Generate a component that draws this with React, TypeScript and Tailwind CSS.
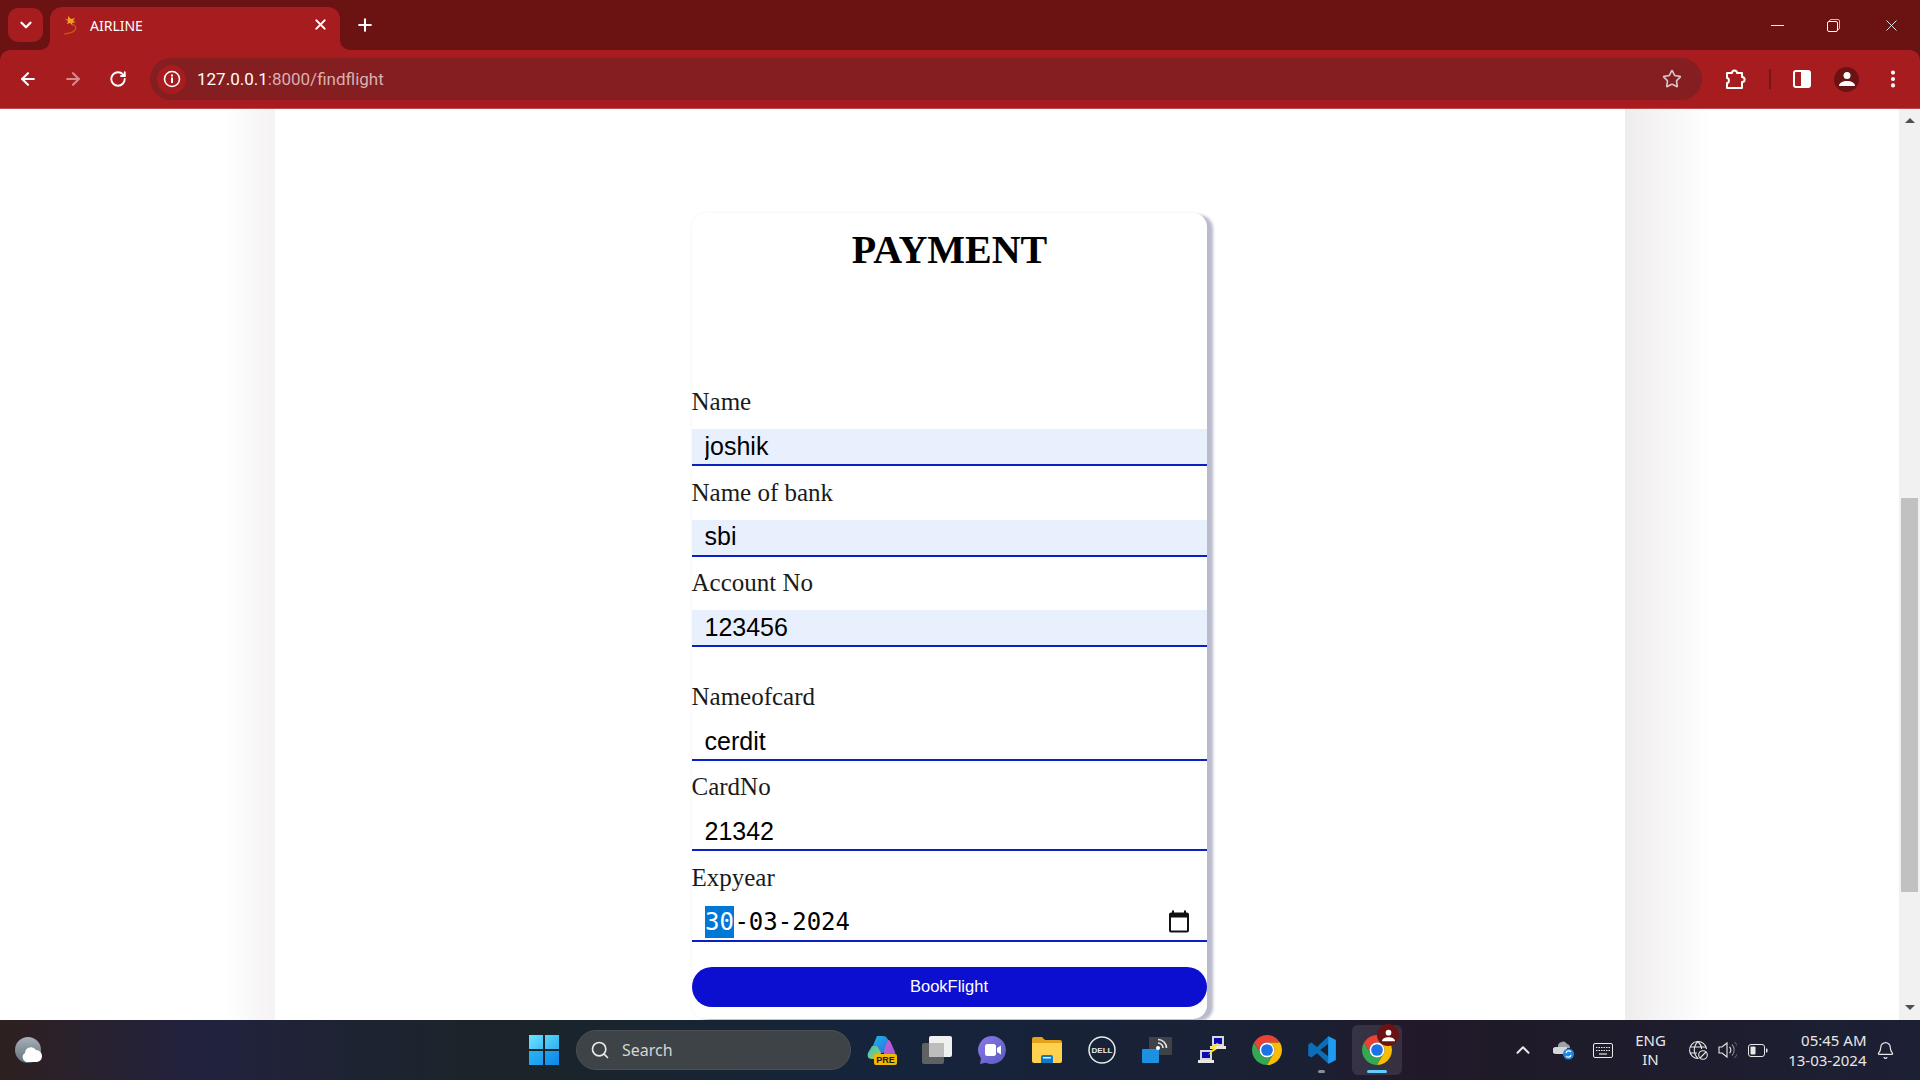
import {
  ArrowLeft,
  ArrowRight,
  Bell,
  ChevronDown,
  ChevronUp,
  EllipsisVertical,
  Plus,
  RotateCw,
  Search,
  Star,
  X,
} from "lucide-react";

interface Field {
  label: string;
  value: string;
  filled?: boolean;
  spaced?: boolean;
}

const fields: Field[] = [
  { label: "Name", value: "joshik", filled: true },
  { label: "Name of bank", value: "sbi", filled: true },
  { label: "Account No", value: "123456", filled: true },
  { label: "Nameofcard", value: "cerdit", spaced: true },
  { label: "CardNo", value: "21342" },
];

function ChromeLogo({ size = 30 }: { size?: number }) {
  return (
    <svg width={size} height={size} viewBox="2 2 44 44">
      <path fill="#ea4335" d="M43.05 13A22 22 0 0 0 4.95 13L14.5 29.5A11 11 0 0 1 24 13Z" />
      <path fill="#34a853" d="M4.95 13A22 22 0 0 0 24 46L33.5 29.5A11 11 0 0 1 14.5 29.5Z" />
      <path fill="#fbbc04" d="M24 46A22 22 0 0 0 43.05 13L24 13A11 11 0 0 1 33.5 29.5Z" />
      <circle cx="24" cy="24" r="11" fill="#fff" />
      <circle cx="24" cy="24" r="8.6" fill="#1a73e8" />
    </svg>
  );
}

function CopilotIcon() {
  return (
    <svg width="30" height="30" viewBox="0 0 30 30">
      <defs>
        <linearGradient id="cpA" x1="0" y1="0" x2="1" y2="1">
          <stop offset="0" stopColor="#1fb6e8" />
          <stop offset="1" stopColor="#2f6fe0" />
        </linearGradient>
        <linearGradient id="cpB" x1="0" y1="0" x2="1" y2="1">
          <stop offset="0" stopColor="#e85ab8" />
          <stop offset="1" stopColor="#8a5cf0" />
        </linearGradient>
        <linearGradient id="cpC" x1="0" y1="0" x2="1" y2="1">
          <stop offset="0" stopColor="#38c0d0" />
          <stop offset="1" stopColor="#a8d040" />
        </linearGradient>
      </defs>
      <path fill="url(#cpB)" d="M17 4c4 0 6 1 7 4l4 9c1 3-1 5-4 5h-6L14 8Z" />
      <path fill="url(#cpA)" d="M10 1h6c3 0 4 2 5 4l-5 13H7L5 13Z" />
      <path fill="url(#cpC)" d="M5 11h5l4 7-2 6H5c-4 0-5-3-4-6Z" />
      <rect x="7" y="19" width="23" height="11" rx="2" fill="#f5b800" />
      <text x="18.5" y="28" textAnchor="middle" fontSize="9" fontWeight="700" fontFamily="Liberation Sans, sans-serif" fill="#1a1a1a">
        PRE
      </text>
    </svg>
  );
}

function TaskViewIcon() {
  return (
    <svg width="30" height="30" viewBox="0 0 30 30">
      <rect x="0" y="8" width="22" height="21" rx="2" fill="#5f6163" />
      <rect x="7" y="1" width="23" height="21" rx="2" fill="#f0f0f0" />
      <rect x="7" y="8" width="15" height="14" fill="#bdbdbd" />
    </svg>
  );
}

function MeetIcon() {
  return (
    <svg width="30" height="30" viewBox="0 0 30 30">
      <defs>
        <linearGradient id="meet" x1="0" y1="0" x2="1" y2="1">
          <stop offset="0" stopColor="#8a78e8" />
          <stop offset="1" stopColor="#5b5bc0" />
        </linearGradient>
      </defs>
      <path fill="url(#meet)" d="M15 1a14 14 0 1 1-6 26.7L3 29l1-5.5A14 14 0 0 1 15 1Z" />
      <rect x="8" y="9" width="11" height="12" rx="2.5" fill="#fff" />
      <path fill="#fff" d="M20 13l4-2.5v9L20 17Z" />
    </svg>
  );
}

function FolderIcon() {
  return (
    <svg width="30" height="26" viewBox="0 0 30 26">
      <path fill="#e3a21a" d="M0 2a2 2 0 0 1 2-2h8l3 3h15a2 2 0 0 1 2 2v5H0Z" />
      <path fill="#ffd14f" d="M0 6h30v18a2 2 0 0 1-2 2H2a2 2 0 0 1-2-2Z" />
      <path fill="#0f78c8" d="M9 20a2 2 0 0 1 2-2h8a2 2 0 0 1 2 2v6H9Z" />
      <rect x="11" y="20" width="8" height="1.5" fill="#d9efff" />
    </svg>
  );
}

function DellIcon() {
  return (
    <svg width="28" height="28" viewBox="0 0 28 28">
      <circle cx="14" cy="14" r="13" fill="none" stroke="#e8e8e8" strokeWidth="1.5" />
      <text x="14" y="17" textAnchor="middle" fontSize="8" fontWeight="700" fontFamily="Liberation Sans, sans-serif" fill="#e8e8e8">
        DELL
      </text>
    </svg>
  );
}

function CastIcon() {
  return (
    <svg width="30" height="26" viewBox="0 0 30 26">
      <rect x="7" y="0" width="23" height="18" rx="1" fill="#3f4246" />
      <rect x="0" y="12" width="17" height="14" rx="1" fill="#1e90e0" />
      <circle cx="16" cy="11" r="2" fill="#fff" />
      <path d="M16 6a5 5 0 0 1 5 5M16 2.500a8.500 8.500 0 0 1 8.500 8.500" fill="none" stroke="#e8e8e8" strokeWidth="1.6" />
    </svg>
  );
}

function PuttyIcon() {
  return (
    <svg width="30" height="30" viewBox="0 0 30 30">
      <rect x="15" y="1" width="12" height="10" fill="#d8d8d8" />
      <rect x="17" y="3" width="8" height="6" fill="#0a0ab8" />
      <rect x="13" y="11" width="16" height="3" fill="#e8e8e8" />
      <rect x="3" y="15" width="12" height="10" fill="#d8d8d8" />
      <rect x="5" y="17" width="8" height="6" fill="#0a0ab8" />
      <rect x="1" y="25" width="16" height="3" fill="#e8e8e8" />
      <path fill="#ffe81a" d="M20 8l-7 5 3 1-5 6 9-6-3-1 5-4Z" />
    </svg>
  );
}

function VsCodeIcon() {
  return (
    <svg width="30" height="30" viewBox="0 0 48 48">
      <path fill="#0a6fb8" fillRule="evenodd" d="M34 2 16 19 7 12 2 15V33L7 36 16 29 34 46 46 40V8ZM34 14V34L21 24Z" />
      <path fill="#1f9cf0" d="M34 2 46 8V40L34 46Z" />
    </svg>
  );
}

function WeatherIcon() {
  return (
    <svg width="28" height="26" viewBox="0 0 28 26">
      <defs>
        <linearGradient id="moon" x1="0" y1="0" x2="0" y2="1">
          <stop offset="0" stopColor="#a8afb8" />
          <stop offset="1" stopColor="#62707a" />
        </linearGradient>
      </defs>
      <circle cx="13" cy="13" r="13" fill="url(#moon)" />
      <path fill="#fff" d="M11 25a5 5 0 0 1-1-9 6 6 0 0 1 11-3 6 6 0 0 1 6 6 6 6 0 0 1-5 6Z" />
    </svg>
  );
}

function TrayCloud() {
  return (
    <svg width="21" height="20" viewBox="0 0 21 20">
      <path fill="#9ea2a8" d="M5 5a5 5 0 0 1 9-1 4 4 0 0 1 3 4H5Z" />
      <path fill="#d4d6da" d="M3 14a3.500 3.500 0 0 1 0-7h11v7Z" />
      <circle cx="15.500" cy="14" r="5.500" fill="#1f88e5" />
      <path d="M13 13a2.800 2.800 0 0 1 5-1M18 15a2.800 2.800 0 0 1-5 1" fill="none" stroke="#fff" strokeWidth="1.2" />
    </svg>
  );
}

function TrayKeyboard() {
  return (
    <svg width="20" height="15" viewBox="0 0 20 15" fill="none">
      <rect x="0.500" y="0.500" width="19" height="14" rx="1.500" stroke="#e8e8e8" />
      <path d="M3 4.500h14M3 7.500h14" stroke="#e8e8e8" strokeWidth="1.200" strokeDasharray="1.500 1" />
      <path d="M6 11h8" stroke="#e8e8e8" strokeWidth="1.200" />
    </svg>
  );
}

function TrayGlobe() {
  return (
    <svg width="20" height="20" viewBox="0 0 20 20" fill="none" stroke="#e8e8e8" strokeWidth="1.100">
      <path d="M10.500 18.500A8.500 8.500 0 1 1 18.500 9" />
      <path d="M10 1.500c-5 5-5 12 0 17M10 1.500c2.500 2.500 3.500 5 3.700 7.500M2 7h16M2 13h7" />
      <circle cx="15" cy="15" r="4.300" fill="#1e1a28" />
      <path d="M12 18l6-6" />
    </svg>
  );
}

function TraySpeaker() {
  return (
    <svg width="19" height="20" viewBox="0 0 19 20" fill="none">
      <path d="M1 7h3l5-4v14l-5-4H1Z" stroke="#e8e8e8" strokeWidth="1.100" />
      <path d="M11.500 7a4 4 0 0 1 0 6" stroke="#e8e8e8" strokeWidth="1.100" />
      <path d="M14 4.500a8 8 0 0 1 0 11" stroke="#8a8a8a" strokeWidth="1.100" />
      <path d="M16.500 2a11 11 0 0 1 0 16" stroke="#55555f" strokeWidth="1.100" />
    </svg>
  );
}

function TrayBattery() {
  return (
    <svg width="20" height="13" viewBox="0 0 20 13" fill="none">
      <rect x="0.500" y="0.500" width="16" height="12" rx="2.500" stroke="#e8e8e8" />
      <rect x="2.500" y="2.500" width="5" height="8" rx="1" fill="#e8e8e8" />
      <path d="M18 4.500h.5a1 1 0 0 1 1 1v2a1 1 0 0 1-1 1H18Z" fill="#e8e8e8" />
    </svg>
  );
}

function Favicon() {
  return (
    <svg width="16" height="20" viewBox="0 0 16 20" fill="none">
      <path fill="#f0a020" d="M5 0l3 3 4-1-2 3 3 1-4 1 1 3-3-3-3 1 1-3-3-2 3 .5Z" />
      <path d="M9 8c4 1 5 5 2 7-2 2-6 2-10 3" stroke="#c85a18" strokeWidth="1.200" />
    </svg>
  );
}

function ExtensionIcon() {
  return (
    <svg width="22" height="22" viewBox="0 0 22 22" fill="none" stroke="#fff" strokeWidth="2" strokeLinejoin="round">
      <path d="M2 5H7C7 1.500 12 1.500 12 5H17V9C20.500 9 20.500 14 17 14V20H2V15C4.500 15 4.500 10 2 10Z" />
    </svg>
  );
}

function TaskIcon({ children, active }: { children: React.ReactNode; active?: boolean }) {
  return (
    <div className="w-[55px] h-[60px] flex items-center justify-center relative">
      {active && <div className="absolute left-[2.500px] top-[5px] w-[50px] h-[50px] rounded-md bg-white/10" />}
      <div className="relative flex">{children}</div>
    </div>
  );
}

function App() {
  return (
    <div className="w-[1920px] h-screen flex flex-col overflow-hidden bg-white font-['Liberation_Serif',serif]">
      {/* title bar */}
      <div className="h-[50px] bg-[#6b1212] flex items-start font-['Noto_Sans',sans-serif] text-white shrink-0">
        <div className="ml-[8px] mt-[8px] w-[35px] h-[34px] rounded-[10px] bg-[#a61c1f] flex items-center justify-center">
          <ChevronDown size={18} strokeWidth={3} />
        </div>
        <div className="relative ml-[7px] mt-[7px] w-[290px] h-[43px] rounded-t-[12px] bg-[#a61c1f] flex items-center pb-[6px]">
          <div className="absolute -left-[10px] bottom-0 w-[10px] h-[10px] bg-[#a61c1f]">
            <div className="w-full h-full rounded-br-[10px] bg-[#6b1212]" />
          </div>
          <div className="absolute -right-[10px] bottom-0 w-[10px] h-[10px] bg-[#a61c1f]">
            <div className="w-full h-full rounded-bl-[10px] bg-[#6b1212]" />
          </div>
          <div className="ml-[13px] flex">
            <Favicon />
          </div>
          <span className="ml-[11px] text-[14px] leading-none">AIRLINE</span>
          <X size={17} strokeWidth={2.500} className="absolute right-[11px] top-[9px]" />
        </div>
        <Plus size={20} strokeWidth={2.500} className="ml-[15px] mt-[15px]" />
        <div className="ml-auto flex items-center h-[50px] pr-[19px]">
          <div className="w-[13px] h-[1px] bg-white/90" />
          <div className="relative ml-[43px] w-[13px] h-[13px]">
            <div className="absolute left-[2px] top-0 w-[11px] h-[11px] border border-white/70 rounded-[2px]" />
            <div className="absolute left-0 top-[2px] w-[11px] h-[11px] border border-white rounded-[2px] bg-[#6b1212]" />
          </div>
          <X size={19} strokeWidth={1.200} className="ml-[42px] text-white/90" />
        </div>
      </div>

      {/* toolbar */}
      <div className="h-[59px] bg-[#6b1212] shrink-0">
        <div className="h-[59px] rounded-t-[10px] bg-[#a61c1f] border-b border-[#c0484a] flex items-center text-white">
          <div className="w-[45px] ml-[5px] flex justify-center">
            <ArrowLeft size={20} strokeWidth={2.500} />
          </div>
          <div className="w-[45px] flex justify-center text-[#d98a8b]">
            <ArrowRight size={20} strokeWidth={2.500} />
          </div>
          <div className="w-[45px] flex justify-center">
            <RotateCw size={18} strokeWidth={2.500} />
          </div>
          <div className="ml-[10px] w-[1552px] h-[42px] rounded-full bg-[#841e20] flex items-center font-['Roboto',sans-serif] text-[17px]">
            <div className="ml-[7px] w-[29px] h-[29px] rounded-full bg-[#a61c1f] flex items-center justify-center">
              <svg width="18" height="18" viewBox="0 0 18 18" fill="none">
                <circle cx="9" cy="9" r="7.500" stroke="#fff" strokeWidth="1.600" />
                <rect x="8" y="7.500" width="2" height="5.500" fill="#fff" />
                <rect x="8" y="4.500" width="2" height="2" fill="#fff" />
              </svg>
            </div>
            <span className="ml-[11px] pt-[2px]">
              127.0.0.1<span className="text-[#d9b0b0]">:8000/findflight</span>
            </span>
            <Star size={20} strokeWidth={2} className="ml-auto mr-[20px] text-[#d6c4c4]" />
          </div>
          <div className="ml-[23px] flex">
            <ExtensionIcon />
          </div>
          <div className="ml-[22px] w-[2px] h-[20px] bg-[#7a1416]" />
          <div className="ml-[22px] w-[18px] h-[18px] border-2 border-white rounded-[3px] flex justify-end">
            <div className="w-[8px] bg-white" />
          </div>
          <div className="ml-[23px] w-[25px] h-[25px] rounded-full bg-[#6b1212] flex items-center justify-center">
            <svg width="16" height="16" viewBox="0 0 16 16" fill="#fff">
              <circle cx="8" cy="4.500" r="3.500" />
              <path d="M0 15c0-3.500 4-5 8-5s8 1.500 8 5Z" />
            </svg>
          </div>
          <EllipsisVertical size={22} strokeWidth={2.500} className="ml-[23px]" />
        </div>
      </div>

      {/* page */}
      <div className="flex-1 flex min-h-0">
        <div className="w-[275px] bg-gradient-to-r from-white from-[82%] to-[#f4f2f2]" />
        <div className="w-[1350px] bg-white flex flex-col items-center">
          <div className="mt-[104px] mr-[2px] w-[515px] h-[806px] rounded-[14px] bg-white shadow-[6px_2px_3px_#b9bacb,0_0_3px_#0000000f]">
            <h1 className="pt-[13.500px] pl-[1px] text-center text-[40px] leading-[46px] font-bold text-black">
              PAYMENT
            </h1>
            <div className="mt-[103px]">
              {fields.map((field) => (
                <div key={field.label} className={field.spaced ? "pt-[34.600px]" : "pt-[11.600px]"}>
                  <label className="block text-[25px] leading-[29px] text-[#1a1a1a]">
                    {field.label}
                  </label>
                  <input
                    readOnly
                    value={field.value}
                    className={`mt-[13px] block w-full h-[37px] border-b-2 border-[#0a1fc4] pl-[13px] outline-none font-['Liberation_Sans',sans-serif] text-[25px] text-black ${
                      field.filled ? "bg-[#e8f0fe]" : "bg-white"
                    }`}
                  />
                </div>
              ))}
              <div className="pt-[11.600px]">
                <label className="block text-[25px] leading-[29px] text-[#1a1a1a]">Expyear</label>
                <div className="mt-[13px] h-[37px] border-b-2 border-[#0a1fc4] pl-[13px] pb-[2px] flex items-center font-['DejaVu_Sans_Mono',monospace] text-[24px] text-black">
                  <span className="px-[0.500px] h-[32px] leading-[32px] bg-[#0078d7] text-white">30</span>
                  <span>-03-2024</span>
                  <svg width="24" height="25" viewBox="0 0 24 24" fill="#111" className="ml-auto mr-[16px]">
                    <path d="M20 3h-1V1h-2v2H7V1H5v2H4c-1.100 0-2 .9-2 2v16c0 1.100.9 2 2 2h16c1.100 0 2-.9 2-2V5c0-1.100-.9-2-2-2zm0 18H4V8h16v13z" />
                  </svg>
                </div>
              </div>
              <button className="mt-[25px] block w-full h-[40px] pb-[2px] rounded-[20px] bg-[#0d0fd0] text-white font-['Liberation_Sans',sans-serif] text-[16.500px]">
                BookFlight
              </button>
            </div>
          </div>
        </div>
        <div className="w-[274px] bg-gradient-to-r from-[#efecec] to-white to-[31%]" />
        <div className="w-[21px] bg-[#f1f1f1] flex flex-col items-center">
          <div className="mt-[9px] w-0 h-0 border-x-[5px] border-x-transparent border-b-[5px] border-b-[#505050]" />
          <div className="mt-[375px] w-[17px] h-[394px] bg-[#c1c1c1]" />
          <div className="mt-[113px] w-0 h-0 border-x-[5px] border-x-transparent border-t-[5px] border-t-[#505050]" />
        </div>
      </div>

      {/* taskbar */}
      <div className="h-[60px] shrink-0 flex items-center bg-[linear-gradient(90deg,#2e2020_0%,#22223f_10%,#1b2428_26%,#15243c_45%,#1a2033_68%,#22192b_73%,#1f1a28_78%,#1c2035_100%)] font-['Noto_Sans',sans-serif] text-[#e8e8e8]">
        <div className="ml-[15px] flex">
          <WeatherIcon />
        </div>
        <div className="ml-[486px] w-[30px] h-[30px] grid grid-cols-2 gap-[1.500px]">
          <div className="bg-gradient-to-br from-[#6fe3ff] to-[#3cc0f5]" />
          <div className="bg-gradient-to-br from-[#58d4fb] to-[#2eb0f2]" />
          <div className="bg-gradient-to-br from-[#2ab4f5] to-[#1a9cf0]" />
          <div className="bg-gradient-to-br from-[#1ea4f2] to-[#0f85e8]" />
        </div>
        <div className="ml-[17px] w-[275px] h-[40px] rounded-full bg-[#3e4347] border border-[#4c5054] flex items-center text-[16px] text-[#d4d4d4]">
          <Search size={20} strokeWidth={2} className="ml-[13px] text-[#e8e8e8]" />
          <span className="ml-[12px]">Search</span>
        </div>
        <div className="ml-[3.500px] flex">
          <TaskIcon><CopilotIcon /></TaskIcon>
          <TaskIcon><TaskViewIcon /></TaskIcon>
          <TaskIcon><MeetIcon /></TaskIcon>
          <TaskIcon><FolderIcon /></TaskIcon>
          <TaskIcon><DellIcon /></TaskIcon>
          <TaskIcon><CastIcon /></TaskIcon>
          <TaskIcon><PuttyIcon /></TaskIcon>
          <TaskIcon><ChromeLogo /></TaskIcon>
          <TaskIcon>
            <VsCodeIcon />
            <div className="absolute left-[11px] top-[35px] w-[7px] h-[3px] rounded-full bg-[#8a8f96]" />
          </TaskIcon>
          <TaskIcon active>
            <ChromeLogo />
            <div className="absolute left-[15px] -top-[11px] w-[22px] h-[22px] rounded-full bg-[#6b1212] flex items-center justify-center">
              <svg width="13" height="13" viewBox="0 0 16 16" fill="#fff">
                <circle cx="8" cy="4.500" r="3.500" />
                <path d="M0 15c0-3.500 4-5 8-5s8 1.500 8 5Z" />
              </svg>
            </div>
            <div className="absolute left-[5px] top-[35px] w-[20px] h-[3px] rounded-full bg-[#60cdff]" />
          </TaskIcon>
        </div>
        <ChevronUp size={22} strokeWidth={2.200} className="ml-[107px]" />
        <div className="ml-[19px] flex"><TrayCloud /></div>
        <div className="ml-[19px] flex"><TrayKeyboard /></div>
        <div className="ml-[22px] w-[32px] text-center text-[15px] leading-[19px]">
          <div>ENG</div>
          <div>IN</div>
        </div>
        <div className="ml-[21px] flex"><TrayGlobe /></div>
        <div className="ml-[10px] flex"><TraySpeaker /></div>
        <div className="ml-[11px] flex"><TrayBattery /></div>
        <div className="ml-[14px] w-[85px] text-right text-[15px] leading-[20px]">
          <div>05:45 AM</div>
          <div>13-03-2024</div>
        </div>
        <Bell size={19} strokeWidth={1.500} className="ml-[9px]" />
      </div>
    </div>
  );
}

export default App;
